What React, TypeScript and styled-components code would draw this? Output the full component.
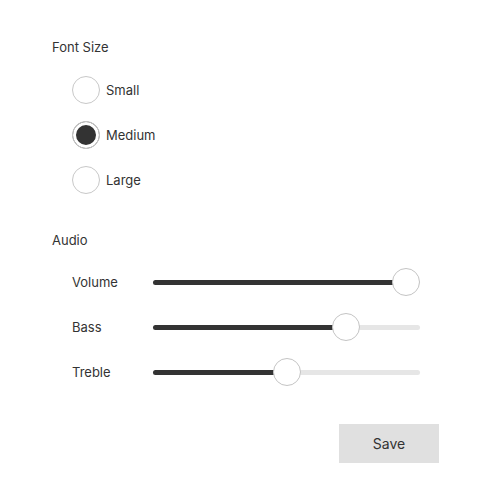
import React, { useState } from "react";
import styled, { createGlobalStyle } from "styled-components";

const Global = createGlobalStyle`
  html, body { margin: 0; padding: 0; background: #ffffff; }
  body { font-family: Inter, "Noto Sans", sans-serif; color: #333333; }
`;

const Page = styled.div`
  width: 479px;
  box-sizing: border-box;
  padding: 38px 40px 0 52px;
  display: flex;
  flex-direction: column;
`;

const Section = styled.section<{ $gap: number }>`
  display: flex;
  flex-direction: column;
  gap: ${(p) => p.$gap}px;
  margin-bottom: 37px;
`;

const Heading = styled.div`
  font-size: 13px;
  line-height: 18px;
  color: #333333;
`;

const List = styled.div`
  display: flex;
  flex-direction: column;
  gap: 17px;
  padding-left: 20px;
`;

const RadioRow = styled.label`
  display: flex;
  align-items: center;
  gap: 6px;
  height: 28px;
  font-size: 13px;
  cursor: pointer;
`;

const RadioCircle = styled.span<{ $checked: boolean }>`
  width: 28px;
  height: 28px;
  box-sizing: border-box;
  border-radius: 50%;
  border: 1px solid #c8c8c8;
  background: ${(p) => (p.$checked ? "#333333" : "#ffffff")};
  box-shadow: inset 0 0 0 3px #ffffff;
  flex: none;
`;

const SliderRow = styled.div`
  display: flex;
  align-items: center;
  height: 28px;
  font-size: 13px;
`;

const SliderLabel = styled.span`
  width: 81px;
  flex: none;
`;

const Track = styled.div`
  position: relative;
  width: 267px;
  height: 5px;
  border-radius: 3px;
  background: #e6e6e6;
  display: flex;
`;

const Fill = styled.div`
  height: 100%;
  border-radius: 3px;
  background: #333333;
`;

const Thumb = styled.div`
  position: absolute;
  top: 50%;
  width: 28px;
  height: 28px;
  box-sizing: border-box;
  margin-left: -14px;
  margin-top: -14px;
  border-radius: 50%;
  background: #ffffff;
  border: 1px solid #c4c4c4;
`;

const Footer = styled.div`
  display: flex;
  justify-content: flex-end;
  margin-top: 1px;
`;

const SaveButton = styled.button`
  width: 100px;
  height: 39px;
  border: none;
  background: #e0e0e0;
  color: #333333;
  font-family: Inter, "Noto Sans", sans-serif;
  font-size: 14px;
  cursor: pointer;
`;

const sizes = ["Small", "Medium", "Large"];
const sliders = [
  { name: "Volume", value: 100 },
  { name: "Bass", value: 75 },
  { name: "Treble", value: 50 },
];

const TRACK = 267;
const THUMB = 28;

export default function App() {
  const [size, setSize] = useState("Medium");
  return (
    <>
      <Global />
      <Page>
        <Section $gap={20}>
          <Heading>Font Size</Heading>
          <List>
            {sizes.map((s) => (
              <RadioRow key={s} onClick={() => setSize(s)}>
                <RadioCircle $checked={size === s} />
                {s}
              </RadioRow>
            ))}
          </List>
        </Section>
        <Section $gap={19}>
          <Heading>Audio</Heading>
          <List>
            {sliders.map((sl) => {
              const pos = THUMB / 2 + ((TRACK - THUMB) * sl.value) / 100;
              return (
                <SliderRow key={sl.name}>
                  <SliderLabel>{sl.name}</SliderLabel>
                  <Track>
                    <Fill style={{ width: pos }} />
                    <Thumb style={{ left: pos }} />
                  </Track>
                </SliderRow>
              );
            })}
          </List>
        </Section>
        <Footer>
          <SaveButton>Save</SaveButton>
        </Footer>
      </Page>
    </>
  );
}
